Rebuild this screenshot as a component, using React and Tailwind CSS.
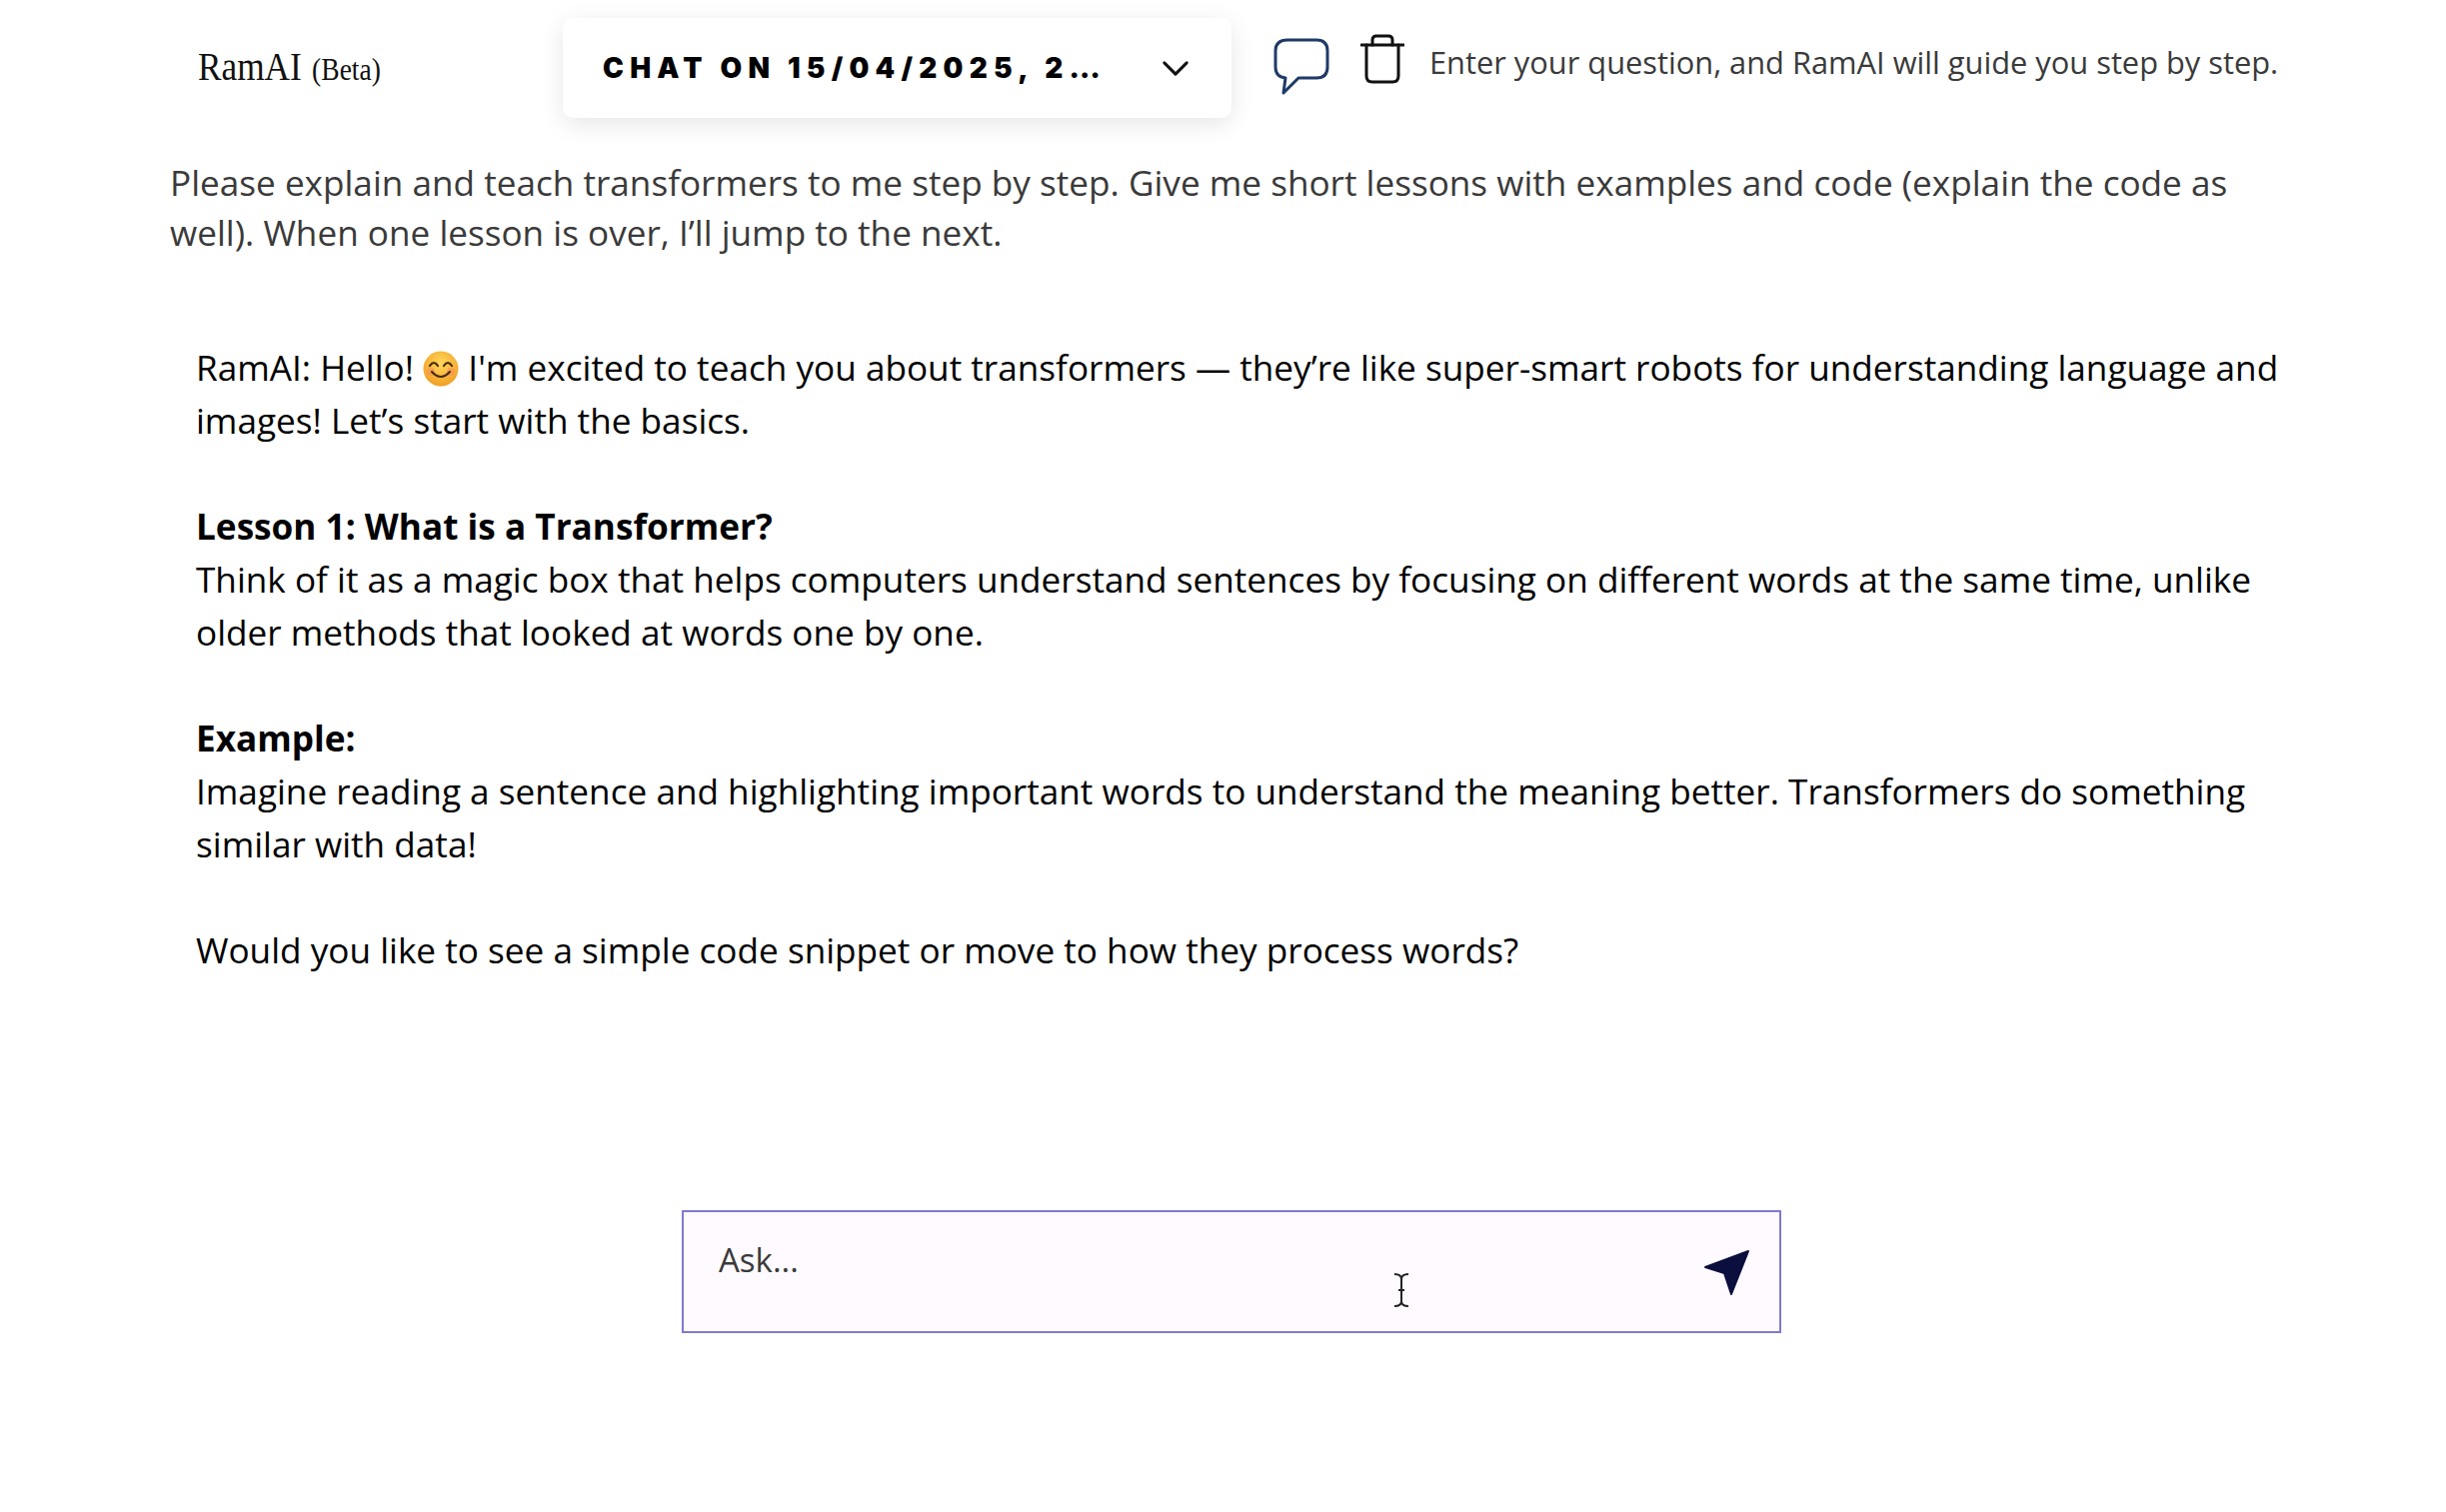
export default function App() {
  return (
    <div className="w-[2447px] h-[1513px] bg-white overflow-hidden relative font-['Open_Sans',sans-serif]">
      <header className="flex items-start h-[118px] pl-[198px]">
        <div className="w-[365px] pt-[42px] font-['Liberation_Serif',serif] text-[#111]">
          <div className="w-[440px] origin-left scale-x-[0.86] text-[41px] leading-[48px] whitespace-nowrap">
            RamAI<span className="text-[32px] ml-[12px]">(Beta)</span>
          </div>
        </div>
        <div className="mt-[18px] w-[669px] h-[100px] rounded-[10px] bg-white shadow-[0_6px_24px_rgba(0,0,0,0.10)] flex items-center pl-[40px] pr-[42px] justify-between">
          <span className="font-['Inter',sans-serif] font-black text-[28px] tracking-[0.222em] text-black whitespace-nowrap">CHAT ON 15/04/2025, 2…</span>
          <svg className="shrink-0" width="28" height="17" viewBox="0 0 30 18" fill="none" stroke="#111" strokeWidth="3.2" strokeLinecap="round" strokeLinejoin="round"><path d="M3 3 L15 15 L27 3" /></svg>
        </div>
        <svg className="ml-[42px] mt-[37px]" width="56" height="60" viewBox="0 0 56 60" fill="none" stroke="#1f3a68" strokeWidth="3"><path d="M14 3 H43 Q54 3 54 14 V30 Q54 41 43 41 H25 L10 56 L12 41 Q2 40 2 30 V14 Q2 3 14 3 Z" strokeLinejoin="round" /></svg>
        <svg className="ml-[31px] mt-[34px]" width="44" height="50" viewBox="0 0 44 50" fill="none" stroke="#111" strokeWidth="3" strokeLinecap="round" strokeLinejoin="round"><path d="M1 11 H43" /><path d="M12 11 V6 Q12 2 16 2 H28 Q32 2 32 6 V11" /><path d="M6 11 V42 Q6 48 12 48 H32 Q38 48 38 42 V11" /></svg>
        <p className="ml-[25px] mt-[40px] text-[30.8px] leading-[44px] text-[#3a3a3a] whitespace-nowrap">Enter your question, and RamAI will guide you step by step.</p>
      </header>

      <p className="ml-[170px] mt-[39px] w-[2110px] text-[35.15px] leading-[50px] text-[#3a3a3a]">
        Please explain and teach transformers to me step by step. Give me short lessons with examples and code (explain the code as well). When one lesson is over, I’ll jump to the next.
      </p>

      <div className="ml-[196px] mt-[84px] w-[2110px] text-[35.16px] leading-[53px] text-black">
        <p>
          RamAI: Hello!{" "}
          <svg className="inline-block align-[-6px]" width="36" height="36" viewBox="0 0 36 36">
            <defs><radialGradient id="f" cx="50%" cy="35%" r="70%"><stop offset="0%" stopColor="#ffd85a" /><stop offset="100%" stopColor="#f09a22" /></radialGradient></defs>
            <circle cx="18" cy="18" r="17.5" fill="url(#f)" />
            <circle cx="8" cy="21" r="4" fill="#f58f5a" opacity="0.6" />
            <circle cx="28" cy="21" r="4" fill="#f58f5a" opacity="0.6" />
            <path d="M7 15 Q11 9 15 15 M21 15 Q25 9 29 15" fill="none" stroke="#4a2c10" strokeWidth="2.2" strokeLinecap="round" />
            <path d="M9 21 Q18 31 27 21" fill="none" stroke="#4a2c10" strokeWidth="2.2" strokeLinecap="round" />
          </svg>{" "}
          I'm excited to teach you about transformers — they’re like super-smart robots for understanding language and images! Let’s start with the basics.
        </p>
        <p className="mt-[53px] font-bold">Lesson 1: What is a Transformer?</p>
        <p>Think of it as a magic box that helps computers understand sentences by focusing on different words at the same time, unlike older methods that looked at words one by one.</p>
        <p className="mt-[53px] font-bold">Example:</p>
        <p>Imagine reading a sentence and highlighting important words to understand the meaning better. Transformers do something similar with data!</p>
        <p className="mt-[53px]">Would you like to see a simple code snippet or move to how they process words?</p>
      </div>

      <div className="mt-[234px] ml-[682px] w-[1100px] h-[123px] border-2 border-[#8079cf] bg-[#fefaff] flex items-center justify-between pl-[35px] pr-[30px] relative">
        <span className="text-[33px] leading-[44px] text-[#3a3a3a] -mt-[24px]">Ask...</span>
        <svg className="absolute left-[710px] top-[61px]" width="16" height="34" viewBox="0 0 16 34" fill="none" stroke="#222" strokeWidth="2"><path d="M1 1 Q8 1 8 6 V28 Q8 33 1 33 M15 1 Q8 1 8 6 M8 28 Q8 33 15 33 M5 17 H11" /></svg>
        <svg width="46" height="46" viewBox="0 0 46 46"><path d="M2 18 L45 2 L28 45 L21 24 Z" fill="#0a0f3d" stroke="#0a0f3d" strokeWidth="2" strokeLinejoin="round" /></svg>
      </div>
    </div>
  );
}
